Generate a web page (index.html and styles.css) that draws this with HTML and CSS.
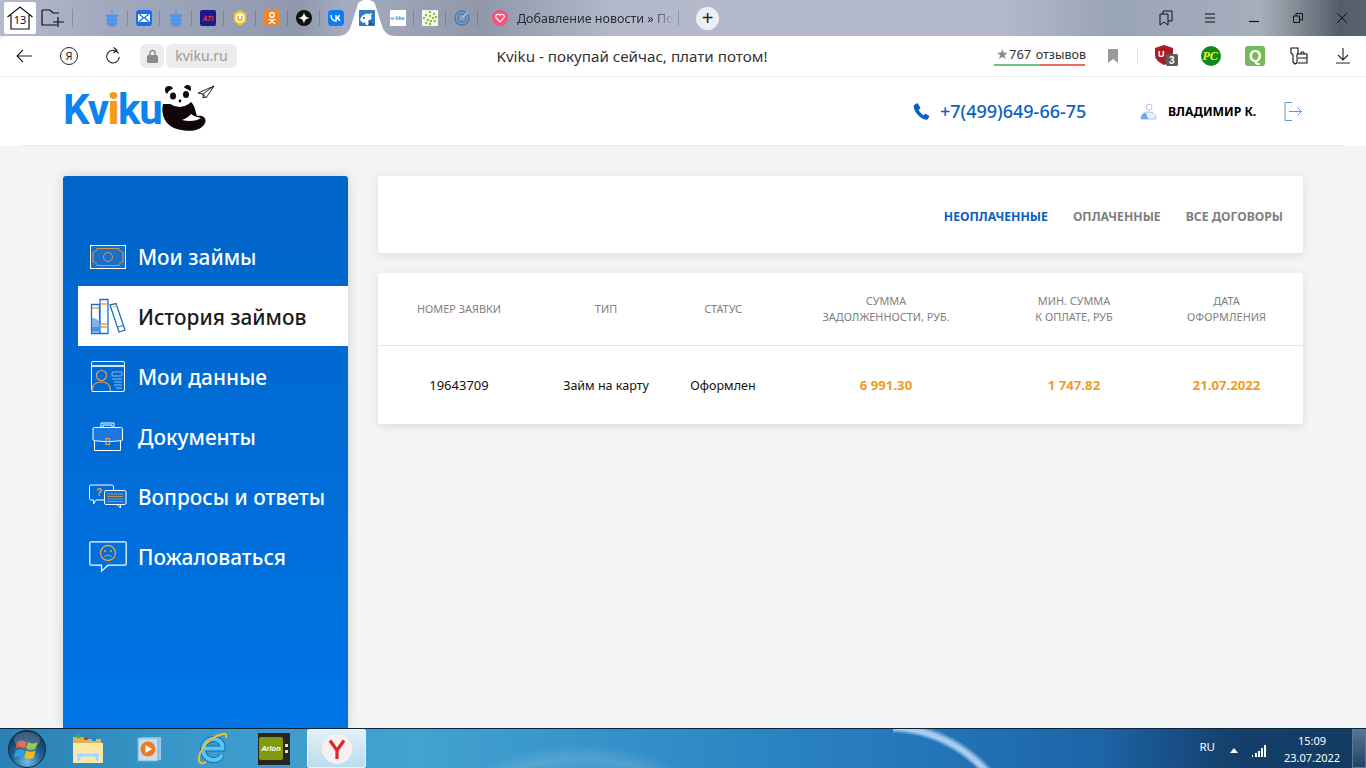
FILE: index.html
```html
<!DOCTYPE html>
<html lang="ru">
<head>
    <meta charset="UTF-8">
    <title>Kviku</title>
    <link rel="stylesheet" href="styles.css">
</head>
<body>
    <!-- Browser tabs -->
    <div class="tabbar">
        <div class="home-tab">
            <svg width="28" height="26" viewBox="0 0 28 26"><path d="M1.500 12 14 2l12.500 10M5 10v14h18V10" fill="none" stroke="#111" stroke-width="1.200"/></svg>
            <span>13</span>
        </div>
        <svg class="new-group" width="24" height="20" viewBox="0 0 24 20"><path d="M1 2h8l3 3h6M1 2v15h15M17 9v10M12 14h11" fill="none" stroke="#111" stroke-width="1.200"/></svg>
        <i class="sep first"></i>
        <div class="pins">
            <span class="pin"><svg width="16" height="18" viewBox="0 0 16 18"><path d="M8 0v5M2 6h12l-2 3H4zM2 10h12l-2 3H4zM3 14h10l-2 3H5z" fill="#4a94ee" stroke="#4a94ee"/></svg></span><i class="sep"></i>
            <span class="pin"><svg width="16" height="16" viewBox="0 0 16 16"><rect width="16" height="16" rx="3" fill="#1a6fe8"/><rect x="2" y="4" width="12" height="8" fill="#fff"/><path d="m3 4 5 4 5-4M3 12l4-4M13 12 9 8" fill="none" stroke="#1a6fe8" stroke-width="1.200"/></svg></span><i class="sep"></i>
            <span class="pin"><svg width="16" height="18" viewBox="0 0 16 18"><path d="M8 0v5M2 6h12l-2 3H4zM2 10h12l-2 3H4zM3 14h10l-2 3H5z" fill="#4a94ee" stroke="#4a94ee"/></svg></span><i class="sep"></i>
            <span class="pin"><svg width="16" height="16" viewBox="0 0 16 16"><rect width="16" height="16" rx="2" fill="#1a1a8c"/><text x="2.500" y="10.500" class="fav-ati">ATI</text></svg></span><i class="sep"></i>
            <span class="pin"><svg width="16" height="16" viewBox="0 0 16 16"><path d="M8 0l6 3.500v8L8 16l-6-4.500v-8z" fill="#f5c92c"/><circle cx="8" cy="8" r="4.500" fill="#fff"/><path d="M6 6v2.500a2 2 0 0 0 4 0V6" fill="none" stroke="#e0a010" stroke-width="1.300"/></svg></span><i class="sep"></i>
            <span class="pin"><svg width="16" height="16" viewBox="0 0 16 16"><rect width="16" height="16" rx="2" fill="#f2842a"/><circle cx="8" cy="5" r="2.300" fill="none" stroke="#fff" stroke-width="1.400"/><path d="M4.500 9c2 1.300 5 1.300 7 0M8 10v1M5 14l3-3 3 3" fill="none" stroke="#fff" stroke-width="1.400"/></svg></span><i class="sep"></i>
            <span class="pin"><svg width="16" height="16" viewBox="0 0 16 16"><circle cx="8" cy="8" r="8" fill="#111"/><path d="M8 2c.6 4 2 5.400 6 6-4 .6-5.400 2-6 6-.6-4-2-5.400-6-6 4-.6 5.400-2 6-6z" fill="#fff"/></svg></span><i class="sep"></i>
            <span class="pin"><svg width="16" height="16" viewBox="0 0 16 16"><rect width="16" height="16" rx="4" fill="#0a7cf5"/><path d="M3 5c.2 4 2 6 5 6V5m0 3c1.500 0 3-1.200 3.500-3M8 8c1.500 0 3.200 1.200 4 3" fill="none" stroke="#fff" stroke-width="1.400"/></svg></span>
            <span class="active-tab">
                <svg width="16" height="16" viewBox="0 0 16 16"><rect width="16" height="16" fill="#2f7dc6"/><path d="M1 10c1-4 5-7 9-6l3-1-1 3c1 2 0 4-2 4l-1 1 1 4H7l-1-3-2 1z" fill="#fff"/><circle cx="5" cy="8" r="1" fill="#1c4f8c"/><path d="M11 11l4 4H9z" fill="#1c4f8c"/></svg>
            </span>
            <span class="pin"><svg width="16" height="16" viewBox="0 0 16 16"><rect width="16" height="16" fill="#fff"/><text x="0.500" y="10" class="fav-vlike">v-like</text></svg></span><i class="sep"></i>
            <span class="pin"><svg width="16" height="16" viewBox="0 0 16 16"><rect width="16" height="16" fill="#f7f7ee"/><g fill="#8cc03c"><circle cx="8" cy="2" r="1.200"/><circle cx="12" cy="4" r="1.200"/><circle cx="4" cy="5" r="1.200"/><circle cx="8" cy="6" r="1.200"/><circle cx="2" cy="8" r="1.200"/><circle cx="11" cy="8" r="1.200"/><circle cx="14" cy="7" r="1.200"/><circle cx="6" cy="10" r="1.200"/><circle cx="9" cy="11" r="1.200"/><circle cx="13" cy="11" r="1.200"/><circle cx="4" cy="13" r="1.200"/><circle cx="8" cy="14" r="1.200"/></g></svg></span><i class="sep"></i>
            <span class="pin"><svg width="16" height="16" viewBox="0 0 16 16"><circle cx="8" cy="8" r="7" fill="none" stroke="#3f7fc0" stroke-width="1.500"/><circle cx="8" cy="8" r="4" fill="none" stroke="#3f7fc0" stroke-width="1.500"/><circle cx="8" cy="8" r="1.500" fill="#3f7fc0"/><path d="M7 9l7-7" stroke="#b9c0d2" stroke-width="1.500"/></svg></span><i class="sep"></i>
        </div>
        <div class="page-tab">
            <svg width="16" height="16" viewBox="0 0 16 16"><circle cx="8" cy="8" r="8" fill="#f8527c"/><path d="M8 12 4.200 8a2.300 2.300 0 0 1 3.800-2.800A2.300 2.300 0 0 1 11.800 8z" fill="none" stroke="#fff" stroke-width="1.100"/></svg>
            <span class="page-tab-title">Добавление новости » По</span>
        </div>
        <i class="sep"></i>
        <button class="add-tab">+</button>
        <div class="win-controls">
            <span><svg width="14" height="16" viewBox="0 0 14 16"><path d="M1 4h8v11l-4-3-4 3zM4 4V1h9v10h-4" fill="none" stroke="#111" stroke-width="1"/></svg></span>
            <span><svg width="12" height="10" viewBox="0 0 12 10"><path d="M1 1h10M1 5h10M1 9h10" stroke="#111" stroke-width="1"/></svg></span>
            <span><svg width="10" height="10" viewBox="0 0 10 10"><path d="M0 8.500h10" stroke="#111" stroke-width="1.200"/></svg></span>
            <span><svg width="10" height="10" viewBox="0 0 10 10"><path d="M.5 3h6v6.500h-6zM3 3V.5h6.500v6.500H7" fill="none" stroke="#111" stroke-width="1"/></svg></span>
            <span><svg width="10" height="10" viewBox="0 0 10 10"><path d="M0 0l10 10M10 0 0 10" stroke="#111" stroke-width="1"/></svg></span>
        </div>
    </div>

    <!-- Address bar -->
    <div class="addressbar">
        <div class="nav-buttons">
            <svg width="16" height="14" viewBox="0 0 16 14"><path d="M7 1 1 7l6 6M1 7h15" fill="none" stroke="#222" stroke-width="1.100"/></svg>
            <span class="ya-btn">Я</span>
            <svg class="reload" width="16" height="17" viewBox="0 0 16 17"><path d="M13.500 6.500A6.300 6.300 0 1 0 14.300 10M8.500 .5l3.500 2.500-3.500 3" fill="none" stroke="#222" stroke-width="1.100"/></svg>
        </div>
        <div class="url-group">
            <span class="lock"><svg width="11" height="14" viewBox="0 0 11 14"><path d="M3 6V4a2.500 2.500 0 0 1 5 0v2" fill="none" stroke="#8a8a8a" stroke-width="1.400"/><rect y="6" width="11" height="8" rx="1.500" fill="#8a8a8a"/></svg></span>
            <span class="url">kviku.ru</span>
        </div>
        <div class="page-title">Kviku - покупай сейчас, плати потом!</div>
        <div class="rating"><span class="star">★</span>767 <small>отзывов</small></div>
        <svg class="bm" width="10" height="14" viewBox="0 0 10 14"><path d="M0 0h10v14L5 10l-5 4z" fill="#9a9a9a"/></svg>
        <i class="sep light"></i>
        <div class="extensions">
            <span class="ext"><svg width="24" height="22" viewBox="0 0 24 22"><path d="M0 3 9 0l9 3v7c0 5-5 8-9 10-4-2-9-5-9-10z" fill="#a81c24"/><text x="3" y="12" class="ext-letter">U</text><rect x="11" y="9" width="12" height="12" rx="1.500" fill="#5c5c5c"/><text x="14" y="19" class="ext-count">3</text></svg></span>
            <span class="ext"><svg width="20" height="20" viewBox="0 0 20 20"><circle cx="10" cy="10" r="10" fill="#0e8a1c"/><text x="1.500" y="14" class="ext-pc">PC</text></svg></span>
            <span class="ext"><svg width="20" height="20" viewBox="0 0 20 20"><rect width="20" height="20" rx="3" fill="#74b85c"/><text x="4" y="16" class="ext-q">Q</text></svg></span>
            <span class="ext"><svg width="18" height="19" viewBox="0 0 18 19"><path d="M1 2h7v5l-1 2v8l-2 1-2-2V9L1 7zM8 8h9v9H8" fill="#fff" stroke="#111" stroke-width="1.100"/><path d="M8 12h9M11 8V6h3v2" fill="none" stroke="#111"/></svg></span>
            <span class="ext"><svg width="14" height="16" viewBox="0 0 14 16"><path d="M7 0v11M2 7l5 5 5-5M0 15h14" fill="none" stroke="#222" stroke-width="1.100"/></svg></span>
        </div>
    </div>

    <!-- Site header -->
    <header class="site-header">
        <div class="header-inner">
            <a class="logo">
                <span class="logo-text">Kv<b>i</b>ku</span>
                <svg class="panda" width="56" height="50" viewBox="0 0 56 50">
                    <circle cx="8" cy="6" r="4" fill="#120608"/>
                    <circle cx="26.500" cy="4.500" r="3.500" fill="#120608"/>
                    <path d="M2 20C-1 32 6 43 16 45c10 3 24 3 28-6 2-5-2-8-8-7-2-6-2-10-6-14L14 20z" fill="#120608"/>
                    <ellipse cx="18.500" cy="13" rx="13" ry="10" fill="#fff"/>
                    <ellipse cx="12" cy="12" rx="3" ry="3.500" fill="#120608"/>
                    <ellipse cx="25" cy="10.500" rx="3" ry="3.500" fill="#120608"/>
                    <circle cx="19" cy="17" r="1.400" fill="#120608"/>
                    <path d="M21 36c3-1 7-3 9-6l3 2 7 2c-4 3-12 4-19 2z" fill="#fff"/>
                    <path d="M37 9 53 2l-8 12-3-4zM42 10 53 2M42 10v4l2-1" fill="#fff" stroke="#111" stroke-width=".9"/>
                </svg>
            </a>
            <a class="phone">
                <svg width="17" height="17" viewBox="0 0 17 17"><path d="M4.500 0 1 2c-1 2 .5 6 3.500 9.500s7 6 10 5l2-3.200-4-2.800-2 1.800C9 11.500 6.500 9 5.700 7L7.500 5z" fill="#0a62c4"/></svg>
                <span>+7(499)649-66-75</span>
            </a>
            <div class="user">
                <svg width="17" height="17" viewBox="0 0 17 17"><circle cx="9" cy="4" r="3" fill="none" stroke="#a9c5e8"/><path d="M1 16c0-5 3-7 7-7 5 0 8 2 8 7z" fill="#e4eef9" stroke="#a9c5e8"/><path d="M1 16c0-3 2-6 5-6l2 6z" fill="#6fa5e0"/></svg>
                <span>ВЛАДИМИР К.</span>
            </div>
            <svg class="logout" width="18" height="19" viewBox="0 0 18 19"><path d="M8 .5H1v18h7M5 9.500h12.500M13.500 5.500l4 4-4 4" fill="none" stroke="#5c9ae0" stroke-width="1"/></svg>
        </div>
    </header>

    <div class="main">
        <!-- Side menu -->
        <nav class="sidebar">
            <a class="menu-item">
                <span class="menu-icon"><svg width="36" height="24" viewBox="0 0 36 24"><rect x=".5" y=".5" width="35" height="23" fill="#1c6fc8" stroke="#fff"/><path d="M7 3.500h22c0 2 2 3.500 4 3.500v10c-2 0-4 1.500-4 3.500H7c0-2-2-3.500-4-3.500V7c2 0 4-1.500 4-3.500z" fill="none" stroke="#d19a50"/><circle cx="18" cy="12" r="4.500" fill="none" stroke="#d19a50"/></svg></span>
                Мои займы
            </a>
            <a class="menu-item active">
                <span class="menu-icon"><svg width="36" height="37" viewBox="0 0 36 37"><path d="M1.500 6.500h8v29h-8zM10 1.500h8v34h-8zM20 7l6-1.500 9 26.500-6 2z" fill="#fff" stroke="#1c6fc8" stroke-width="1.300"/><path d="M2 20c4 0 7 2 7.500 6v9H2z" fill="#7fb2ea"/><path d="M2 10h7M11 6h6M23 9l5-1.500M11 26h6M11 29h6" stroke="#f0a040" stroke-width="1.300"/><path d="M2 30h7M2 32h7M28 29l5-1.500" stroke="#1c6fc8"/></svg></span>
                История займов
            </a>
            <a class="menu-item">
                <span class="menu-icon"><svg width="34" height="31" viewBox="0 0 34 31"><rect x=".5" y=".5" width="33" height="30" rx="1.500" fill="none" stroke="#fff"/><path d="M1 5h32" stroke="#cfe2f8" stroke-width="2"/><path d="M1 30c0-6 4-9 9.500-9s9 3 9 9" fill="none" stroke="#f0a040" stroke-width="1.200"/><circle cx="10.500" cy="14.500" r="5" fill="none" stroke="#f0a040" stroke-width="1.200"/><rect x="21" y="11" width="10" height="4" rx="1" fill="none" stroke="#8fbcf0"/><path d="M21 18h10M23 21h8M23 24h8M25 27h6" stroke="#8fbcf0"/></svg></span>
                Мои данные
            </a>
            <a class="menu-item">
                <span class="menu-icon"><svg width="32" height="30" viewBox="0 0 32 30"><path d="M9 6V1h13v5M11 6V3h9v3" fill="none" stroke="#fff"/><path d="M1 7a1.500 1.500 0 0 1 1.500-1.500h26A1.500 1.500 0 0 1 30.500 7v11c-5 2-25 2-29.500 0z" fill="#1c78e0" stroke="#fff"/><path d="M2.500 18.500v10h26v-10" fill="none" stroke="#fff"/><rect x="14" y="16.500" width="3.500" height="6" fill="none" stroke="#f0a040" stroke-width="1.200"/></svg></span>
                Документы
            </a>
            <a class="menu-item">
                <span class="menu-icon"><svg width="38" height="25" viewBox="0 0 38 25"><path d="M15 16H7l-2.500 4v-4H2a1.500 1.500 0 0 1-1.500-1.500v-12A1.500 1.500 0 0 1 2 1h21a1.500 1.500 0 0 1 1.500 1.500V6" fill="none" stroke="#fff"/><rect x="15.500" y="6.500" width="21.500" height="14" rx="1.500" fill="#0a70dc" stroke="#fff"/><path d="M28 20.500h3.500v3.500z" fill="#0a70dc" stroke="#fff"/><path d="M18.500 10h15.500M18.500 12.500h15.500M18.500 15h15.500M18.500 17.500h15.500" stroke="#f0a040" stroke-opacity=".7"/><text x="7" y="12" class="icon-q">?</text></svg></span>
                Вопросы и ответы
            </a>
            <a class="menu-item">
                <span class="menu-icon"><svg width="38" height="32" viewBox="0 0 38 32"><path d="M2 .8h34a1.200 1.200 0 0 1 1.200 1.200v21a1.200 1.200 0 0 1-1.200 1.200H19l-6.500 6v-6H2A1.200 1.200 0 0 1 .8 23V2A1.200 1.200 0 0 1 2 .8z" fill="none" stroke="#fff" stroke-width="1.200"/><circle cx="19" cy="12" r="7.500" fill="none" stroke="#f0a040" stroke-width="1.300"/><circle cx="16" cy="10" r="1" fill="#f0a040"/><circle cx="22" cy="10" r="1" fill="#f0a040"/><path d="M15 16c2-2.500 6-2.500 8 0" fill="none" stroke="#f0a040"/></svg></span>
                Пожаловаться
            </a>
        </nav>

        <div class="content">
            <div class="card filter-card">
                <a class="filter current">НЕОПЛАЧЕННЫЕ</a>
                <a class="filter">ОПЛАЧЕННЫЕ</a>
                <a class="filter">ВСЕ ДОГОВОРЫ</a>
            </div>
            <div class="card loans">
                <div class="loans-row loans-head">
                    <div>НОМЕР ЗАЯВКИ</div>
                    <div>ТИП</div>
                    <div>СТАТУС</div>
                    <div>СУММА<br>ЗАДОЛЖЕННОСТИ, РУБ.</div>
                    <div>МИН. СУММА<br>К ОПЛАТЕ, РУБ</div>
                    <div>ДАТА<br>ОФОРМЛЕНИЯ</div>
                </div>
                <div class="loans-row loans-body">
                    <div class="loan-id">19643709</div>
                    <div>Займ на карту</div>
                    <div>Оформлен</div>
                    <div class="money">6 991.30</div>
                    <div class="money">1 747.82</div>
                    <div class="money">21.07.2022</div>
                </div>
            </div>
        </div>
    </div>

    <!-- Windows taskbar -->
    <footer class="taskbar">
        <svg class="orb" width="38" height="38" viewBox="0 0 38 38">
            <defs>
                <radialGradient id="orbFill" cx="50%" cy="85%" r="75%">
                    <stop offset="0" stop-color="#6fc0e6"/>
                    <stop offset=".55" stop-color="#1f5f92"/>
                    <stop offset="1" stop-color="#123a5e"/>
                </radialGradient>
            </defs>
            <circle cx="19" cy="19" r="18.500" fill="url(#orbFill)" stroke="#0d2a48"/>
            <path d="M9 12c3-2 6-2 9.500 0l-1.700 7c-3-1.700-6-1.700-9.500 0z" fill="#e2502a"/>
            <path d="M20 12c3 2 6 2 9.500 0l-1.700 7c-3 1.700-6 1.700-9.500 0z" fill="#8cc02c"/>
            <path d="M7.500 20.500c3-1.700 6-1.700 9 0l-1.700 7c-3-1.700-6-1.700-9 0z" fill="#2f9fe0"/>
            <path d="M18 20.500c3 1.700 6 1.700 9.500 0l-1.700 7c-3 1.700-6 1.700-9.500 0z" fill="#f5b820"/>
            <ellipse cx="19" cy="10" rx="13" ry="8" fill="#fff" fill-opacity=".18"/>
        </svg>
        <div class="task-app folder">
            <svg width="32" height="30" viewBox="0 0 32 30"><path d="M1 3h10l2 2h16v6H1z" fill="#d9b45c"/><rect x="4" y="1" width="5" height="3" fill="#40b040"/><rect x="12" y="3" width="4" height="3" fill="#d04030"/><rect x="20" y="4" width="4" height="3" fill="#3080d0"/><path d="M1 9h30v20H1z" fill="#fbe6a6"/><path d="M5 19h22v8h-4v-4H9v4H5z" fill="#a8d8f0" stroke="#e8f6fc" stroke-width=".6"/></svg>
        </div>
        <div class="task-app media">
            <svg width="26" height="26" viewBox="0 0 26 26"><rect x="4" y="1" width="20" height="23" fill="#9cc6e2"/><rect x="1" y="2" width="20" height="23" fill="#c4ddf0" stroke="#7fb0d2"/><circle cx="11" cy="13" r="7.500" fill="#ef7a1e"/><path d="M8.500 9v8l6.500-4z" fill="#fff"/></svg>
        </div>
        <div class="task-app ie">
            <svg width="30" height="32" viewBox="0 0 30 32">
                <path d="M8 15.500h17.500C26 9 21 6 16.500 6 10.500 6 6 10.500 6 16.500S10.500 27 16.500 27c4 0 7-2 8.500-5" fill="none" stroke="#1668b4" stroke-width="6"/>
                <path d="M8 15.500h17.500C26 9 21 6 16.500 6 10.500 6 6 10.500 6 16.500S10.500 27 16.500 27c4 0 7-2 8.500-5" fill="none" stroke="#58c6f6" stroke-width="4"/>
                <path d="M4 30C-3 27 8 4 26 1c3-.5 4 1 3 4M3 30c2 1 4 0 6-1" fill="none" stroke="#ecc030" stroke-width="2"/>
            </svg>
        </div>
        <div class="task-app game">
            <div class="game-tile">
                <span class="game-label">Arion</span>
                <span class="game-dots"><i></i><i></i></span>
            </div>
        </div>
        <div class="task-app ya-task">
            <svg width="30" height="30" viewBox="0 0 30 30"><circle cx="15" cy="15" r="15" fill="#f5f1f0"/><path d="M8 6.500l7 10 7-10M15 16v9" fill="none" stroke="#e0232e" stroke-width="3.200"/></svg>
        </div>
        <div class="tray">
            <span class="lang">RU</span>
            <svg class="tray-arrow" width="8" height="5" viewBox="0 0 8 5"><path d="M0 5l4-5 4 5z" fill="#fff"/></svg>
            <svg class="tray-signal" width="16" height="13" viewBox="0 0 16 13"><path d="M1 11h1v2H1zM4 9h2v4H4zM7 7h2v6H7zM10 4h2v9h-2zM13 1h2v12h-2z" fill="#fff"/></svg>
            <div class="clock">15:09<br>23.07.2022</div>
        </div>
        <div class="show-desktop"></div>
    </footer>
</body>
</html>
```

FILE: styles.css
```css
* {
    box-sizing: border-box;
}
html, body {
    margin: 0;
    padding: 0;
    height: 100%;
}
body {
    width: 1366px;
    height: 768px;
    overflow: hidden;
    display: flex;
    flex-direction: column;
    font-family: "Noto Sans", "Open Sans", Arial, sans-serif;
    background-color: #f3f4f6;
}
svg {
    flex: none;
    display: block;
}
.sep {
    flex: none;
    display: block;
    width: 1px;
    height: 16px;
    background-color: rgba(60, 70, 90, 0.3);
}

/* tabs */
.tabbar {
    flex: none;
    height: 36px;
    display: flex;
    align-items: center;
    background: linear-gradient(90deg, #b4bacd 0, #a3aabf 100px, #8f98ad 300px, #a5acc0 345px, #8f97a8 480px, #b4bacb 620px, #b3b9ca 1000px, #99a4b5 1110px, #a6aebd 1260px, #8a929c 1290px, #545e69 1340px, #5a636e 1366px);
}
.home-tab {
    position: relative;
    width: 32px;
    height: 32px;
    margin-left: 4px;
    background-color: #fff;
    border-radius: 2px;
    display: flex;
    align-items: center;
    justify-content: center;
}
.home-tab span {
    position: absolute;
    top: 10px;
    left: 0;
    width: 100%;
    text-align: center;
    font-size: 11px;
    color: #111;
}
.new-group {
    margin-left: 5px;
}
.sep.first {
    margin-left: 7px;
    height: 18px;
}
.pins {
    display: flex;
    align-items: center;
    margin-left: 23px;
}
.pin {
    width: 31px;
    height: 36px;
    display: flex;
    align-items: center;
    justify-content: center;
}
.fav-ati {
    font: italic bold 7px "Liberation Sans", sans-serif;
    fill: #e8372c;
}
.fav-vlike {
    font: bold 5.500px "Liberation Sans", sans-serif;
    fill: #4a8fd8;
}
.active-tab {
    flex: none;
    width: 57px;
    height: 36px;
    margin: 0 -13px;
    display: flex;
    align-items: center;
    justify-content: center;
    background-color: #fff;
    clip-path: path("M0 36C7 36 11 32 13 26L19 7C20 2 23 0 27 0H30C34 0 37 2 38 7L44 26C46 32 50 36 57 36Z");
}
.page-tab {
    width: 200px;
    display: flex;
    align-items: center;
    gap: 9px;
    padding-left: 14px;
}
.page-tab-title {
    width: 160px;
    overflow: hidden;
    white-space: nowrap;
    font-size: 12.500px;
    color: #2a2d33;
    -webkit-mask-image: linear-gradient(90deg, #000 85%, transparent 98%);
    mask-image: linear-gradient(90deg, #000 85%, transparent 98%);
}
.add-tab {
    width: 23px;
    height: 23px;
    margin-left: 17px;
    padding: 0;
    border: none;
    border-radius: 50%;
    background-color: #eceef3;
    color: #222;
    font-family: "Liberation Sans", sans-serif;
    font-size: 20px;
    line-height: 22px;
}
.win-controls {
    margin-left: auto;
    display: flex;
    align-items: center;
    padding-right: 2px;
}
.win-controls span {
    width: 44px;
    display: flex;
    justify-content: center;
}

/* address bar */
.addressbar {
    flex: none;
    height: 41px;
    display: flex;
    align-items: center;
    background-color: #fff;
    border-radius: 8px 8px 0 0;
    border-bottom: 1px solid #ececec;
    padding-bottom: 1px;
}
.nav-buttons {
    width: 140px;
    display: flex;
    align-items: center;
    gap: 28px;
    padding-left: 16px;
}
.reload {
    margin-left: -1px;
}
.ya-btn {
    width: 18px;
    height: 18px;
    flex: none;
    border: 1px solid #222;
    border-radius: 50%;
    font-size: 11px;
    line-height: 16px;
    text-align: center;
    color: #222;
}
.url-group {
    display: flex;
    gap: 2px;
    width: 97px;
}
.lock {
    width: 24px;
    height: 24px;
    background-color: #ececec;
    border-radius: 6px;
    display: flex;
    align-items: center;
    justify-content: center;
}
.url {
    width: 71px;
    height: 24px;
    background-color: #ececec;
    border-radius: 6px;
    color: #9a9a9a;
    font-size: 14px;
    line-height: 23px;
    text-align: center;
}
.page-title {
    width: 757px;
    padding-left: 33px;
    text-align: center;
    font-size: 15.200px;
    color: #333;
}
.rating {
    width: 91px;
    height: 21px;
    font-size: 13px;
    line-height: 17px;
    color: #333;
    white-space: nowrap;
    border-bottom: 2px solid;
    border-image: linear-gradient(90deg, #74c08c 50%, #ef6a58 50%) 1;
    padding-left: 2px;
}
.rating small {
    font-size: 12.500px;
    margin-left: 1px;
}
.star {
    color: #8a8a8a;
    font-size: 14px;
}
.bm {
    margin-left: 23px;
}
.sep.light {
    margin-left: 19px;
    background-color: #e4e4e4;
    height: 16px;
}
.extensions {
    display: flex;
    align-items: center;
    margin-left: 7px;
}
.ext {
    width: 44px;
    display: flex;
    justify-content: center;
}
.ext-letter {
    font: bold 9px "Liberation Sans", sans-serif;
    fill: #fff;
}
.ext-count {
    font: bold 10px "Liberation Sans", sans-serif;
    fill: #fff;
}
.ext-pc {
    font: italic bold 12px "Liberation Serif", serif;
    fill: #f3ee2b;
}
.ext-q {
    font: bold 16px "Liberation Sans", sans-serif;
    fill: #fff;
}

/* site header */
.site-header {
    flex: none;
    height: 69px;
    background-color: #fff;
    padding: 0 22px;
}
.header-inner {
    height: 69px;
    display: flex;
    align-items: center;
    padding-left: 41px;
    border-bottom: 1px solid #ebebeb;
}
.logo {
    display: flex;
    align-items: center;
    width: 850px;
}
.logo-text {
    font-family: Roboto, sans-serif;
    font-weight: 700;
    font-size: 42px;
    letter-spacing: -1.200px;
    line-height: 44px;
    color: #0b84f0;
    margin-top: -2px;
}
.logo-text b {
    color: #f59a12;
}
.panda {
    margin-left: -1px;
    margin-top: -4px;
}
.phone {
    width: 227px;
    display: flex;
    align-items: center;
    gap: 10px;
    color: #0a62c4;
    font-size: 18px;
    font-weight: 500;
}
.user {
    width: 144px;
    display: flex;
    align-items: center;
    gap: 11px;
    font-size: 12.200px;
    font-weight: 700;
    color: #000;
}

/* main */
.main {
    flex: 1;
    min-height: 0;
    display: flex;
    align-items: flex-start;
    gap: 30px;
    padding: 30px 0 0 63px;
}
.sidebar {
    width: 285px;
    height: 552px;
    padding: 50px 0 0 15px;
    border-radius: 3px 3px 0 0;
    background: linear-gradient(180deg, #0064c8 0, #0075e6 100%);
    box-shadow: 0 0 12px rgba(0, 0, 0, 0.15);
}
.menu-item {
    height: 60px;
    display: flex;
    align-items: center;
    color: #fff;
    font-size: 20.800px;
    font-weight: 500;
    white-space: nowrap;
    padding: 1px 0 0 11px;
}
.menu-icon {
    flex: none;
    width: 38px;
    margin-right: 11px;
    display: flex;
    justify-content: center;
}
.icon-q {
    font: bold 10px "Liberation Sans", sans-serif;
    fill: #f0a040;
}
.menu-item.active {
    background-color: #fff;
    color: #1a1a1a;
}
.content {
    width: 925px;
    display: flex;
    flex-direction: column;
    gap: 20px;
}
.card {
    background-color: #fff;
    border-radius: 3px;
    box-shadow: 0 2px 8px rgba(0, 0, 0, 0.1);
}
.filter-card {
    height: 77px;
    display: flex;
    align-items: center;
    justify-content: flex-end;
    gap: 25px;
    padding: 4px 20px 0 0;
}
.filter {
    font-size: 12.200px;
    font-weight: 700;
    color: #7f7f7f;
}
.filter.current {
    color: #0a5fc2;
}
.loans-row {
    display: grid;
    grid-template-columns: 162px 132px 102px 224px 152px 153px;
    align-items: center;
    text-align: center;
}
.loans-head {
    height: 73px;
    border-bottom: 1px solid #e4e6e9;
    font-size: 10.900px;
    line-height: 16px;
    color: #808080;
}
.loans-body {
    height: 78px;
    font-size: 12.500px;
    color: #111;
}
.loan-id {
    font-size: 13px;
}
.money {
    color: #f39a1d;
    font-size: 13.200px;
    font-weight: 700;
}

/* taskbar */
.taskbar {
    flex: none;
    height: 40px;
    display: flex;
    align-items: center;
    position: relative;
    background-color: #2578bc;
    background-image:
        radial-gradient(circle at -5px 130px, transparent 126px, rgba(190, 220, 250, 0.85) 130px, rgba(190, 220, 250, 0.85) 133px, transparent 138px),
        radial-gradient(circle at 580px 230px, transparent 185px, rgba(255, 255, 255, 0.14) 200px, transparent 215px),
        linear-gradient(90deg, #2b7fb2 0, #3b9acb 200px, #42a2d0 420px, #2f8ac6 700px, #2578bc 900px, #1d64a8 1100px, #15406c 1230px, #123a62 1366px);
    background-size: 120px 40px, 100% 100%, 100% 100%;
    background-position: 893px 0, 0 0, 0 0;
    background-repeat: no-repeat;
    border-top: 1px solid #0d2438;
}
.orb {
    margin-left: 8px;
}
.task-app {
    width: 62px;
    height: 39px;
    display: flex;
    align-items: center;
    justify-content: center;
}
.folder {
    margin-left: 11px;
}
.game-tile {
    width: 32px;
    height: 32px;
    padding: 4px 2px 5px 1px;
    display: flex;
    gap: 2px;
    background-color: #2c2420;
}
.game-label {
    width: 24px;
    border-radius: 2px;
    background-color: #7f9a0a;
    color: #fff;
    font: italic bold 7.500px/23px "Liberation Sans", sans-serif;
    text-align: center;
}
.game-dots {
    display: flex;
    flex-direction: column;
    justify-content: center;
    gap: 3px;
}
.game-dots i {
    display: block;
    width: 3px;
    height: 3px;
    background-color: #e8e0c8;
}
.ya-task {
    width: 59px;
    margin-left: 2px;
    background: linear-gradient(180deg, #e2f0f8, #bcdcee);
    border: 1px solid #e8f4fa;
    border-radius: 2px;
}
.tray {
    position: absolute;
    right: 14px;
    top: 0;
    height: 39px;
    display: flex;
    align-items: center;
    color: #fff;
}
.lang {
    font-size: 11.500px;
    margin-top: -4px;
}
.tray-arrow {
    margin-left: 15px;
    margin-top: 3px;
}
.tray-signal {
    margin-left: 13px;
    margin-top: 3px;
}
.clock {
    width: 80px;
    margin-left: 5px;
    text-align: center;
    font-size: 11px;
    line-height: 17px;
}
.show-desktop {
    position: absolute;
    right: 0;
    top: 0;
    width: 14px;
    height: 39px;
    border: 1px solid #5a7a96;
    background: linear-gradient(180deg, rgba(255,255,255,0.3), rgba(255,255,255,0.05));
}
```
